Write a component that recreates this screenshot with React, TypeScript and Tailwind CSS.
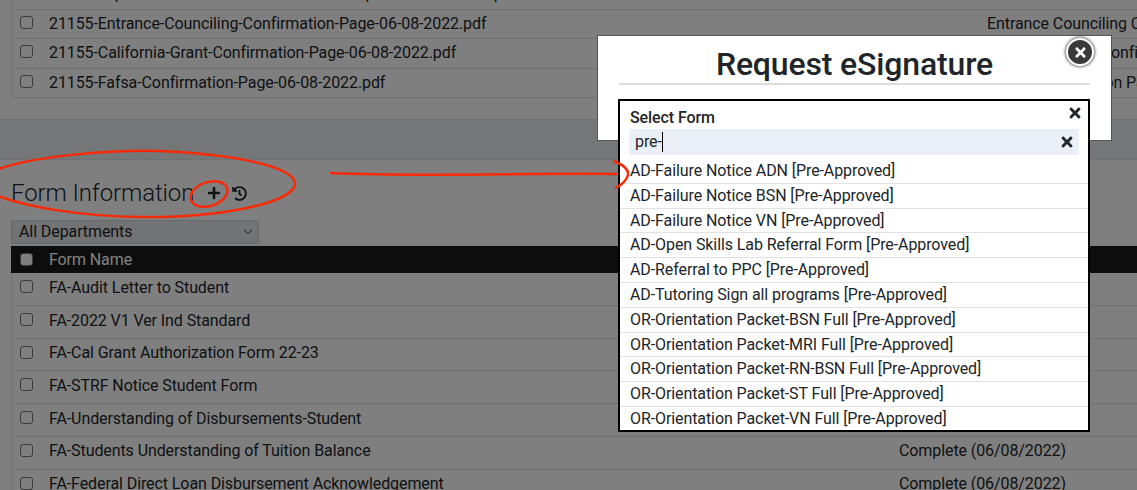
import { ChevronDown } from 'lucide-react';
import { FaHistory, FaPlus, FaTimes } from 'react-icons/fa';

const documents = [
  { name: '21155-Expected-Income-Statement-Record-Update-06-08-2022.pdf', type: '' },
  { name: '21155-Entrance-Counciling-Confirmation-Page-06-08-2022.pdf', type: 'Entrance Counciling Confirmation Page' },
  { name: '21155-California-Grant-Confirmation-Page-06-08-2022.pdf', type: 'California Grant Confirmation Page' },
  { name: '21155-Fafsa-Confirmation-Page-06-08-2022.pdf', type: 'Fafsa Confirmation Page' },
];

const forms = [
  { name: 'FA-Audit Letter to Student', status: '' },
  { name: 'FA-2022 V1 Ver Ind Standard', status: '' },
  { name: 'FA-Cal Grant Authorization Form 22-23', status: '' },
  { name: 'FA-STRF Notice Student Form', status: '' },
  { name: 'FA-Understanding of Disbursements-Student', status: '' },
  { name: 'FA-Students Understanding of Tuition Balance', status: 'Complete (06/08/2022)' },
  { name: 'FA-Federal Direct Loan Disbursement Acknowledgement', status: 'Complete (06/08/2022)' },
];

const options = [
  'AD-Failure Notice ADN [Pre-Approved]',
  'AD-Failure Notice BSN [Pre-Approved]',
  'AD-Failure Notice VN [Pre-Approved]',
  'AD-Open Skills Lab Referral Form [Pre-Approved]',
  'AD-Referral to PPC [Pre-Approved]',
  'AD-Tutoring Sign all programs [Pre-Approved]',
  'OR-Orientation Packet-BSN Full [Pre-Approved]',
  'OR-Orientation Packet-MRI Full [Pre-Approved]',
  'OR-Orientation Packet-RN-BSN Full [Pre-Approved]',
  'OR-Orientation Packet-ST Full [Pre-Approved]',
  'OR-Orientation Packet-VN Full [Pre-Approved]',
];

function Checkbox() {
  return <span className="block w-[13px] h-[13px] rounded-[3px] border border-[#767676] bg-white" />;
}

export default function App() {
  return (
    <div className="relative w-[1137px] h-[490px] overflow-hidden bg-white font-['Roboto',sans-serif] text-base tracking-[-0.09px] text-[#212529]">
      {/* documents */}
      <div className="-mt-[20px] ml-[11px] w-[1200px] border-l border-[#dee2e6]">
        {documents.map((doc) => (
          <div key={doc.name} className="flex h-[29.6px] border-b border-[#dee2e6]">
            <div className="w-[975px] shrink-0 flex items-start">
              <div className="ml-[8px] mt-[6px]">
                <Checkbox />
              </div>
              <span className="ml-[16px] mt-[2px] leading-[24px] whitespace-nowrap">{doc.name}</span>
            </div>
            <span className="mt-[2px] leading-[24px] whitespace-nowrap">{doc.type}</span>
          </div>
        ))}
      </div>

      <div className="mt-[21px] h-[41px] bg-[#e9ecef] border-y border-[#dee2e6]" />

      {/* forms */}
      <div className="ml-[11px] w-[1200px]">
        <div className="mt-[17px] flex items-center h-[32px]">
          <h2 className="font-light text-[24px] tracking-[-0.1px] leading-[32px] text-[#212529] whitespace-nowrap">Form Information</h2>
          <FaPlus className="ml-[13px] text-[14px] text-[#212529]" />
          <FaHistory className="ml-[11px] text-[15px] text-[#212529]" />
        </div>
        <div className="mt-[11px] w-[248px] h-[24px] flex items-center justify-between pl-[7px] pr-[3px] bg-[#e2e6ea] border border-[#ced4da]">
          <span>All Departments</span>
          <ChevronDown size={14} strokeWidth={1.5} />
        </div>
        <div className="mt-[2px] h-[27px] flex items-center bg-[#1a1a1c] text-white">
          <div className="ml-[9px]">
            <Checkbox />
          </div>
          <span className="ml-[16px]">Form Name</span>
        </div>
        <div className="border-l border-[#dee2e6]">
          {forms.map((form) => (
            <div key={form.name} className="flex h-[32.7px] border-b border-[#dee2e6]">
              <div className="w-[887px] shrink-0 flex items-start">
                <div className="ml-[8px] mt-[7px]">
                  <Checkbox />
                </div>
                <span className="ml-[16px] mt-[2.5px] leading-[24px] whitespace-nowrap">{form.name}</span>
              </div>
              <span className="mt-[2.5px] leading-[24px] whitespace-nowrap">{form.status}</span>
            </div>
          ))}
        </div>
      </div>

      {/* backdrop */}
      <div className="absolute inset-0 bg-black/50" />

      {/* annotations under modal */}
      <svg className="absolute inset-0" width="1137" height="490" fill="none" stroke="#fa2a06" strokeWidth="2.5">
        <path d="M-2 169 C40 155 110 150 160 151 C230 154 296 166 295 184 C293 203 220 218 140 217 C80 216 25 207 -4 195" />
        <ellipse cx="209" cy="194" rx="19" ry="12" transform="rotate(-18 209 194)" />
        <path d="M330 173 C420 177 520 173 618 174" />
      </svg>

      {/* modal */}
      <div className="absolute left-[597px] top-[35px] w-[515px] h-[106px] bg-white border border-[#555] px-[21px]">
        <h1 className="mt-[8px] text-center text-[32px] tracking-[-0.15px] font-medium leading-[40px]">Request eSignature</h1>
        <div className="-mt-[1px] h-[2px] bg-[#dcdcdc]" />
      </div>
      <div className="absolute left-[1066px] top-[38px] w-[28px] h-[28px] rounded-full bg-[#3a3a3a] border-2 border-white shadow-[0_0_3px_1px_rgba(0,0,0,0.6)] flex items-center justify-center">
        <FaTimes className="text-[15px] text-white" />
      </div>

      {/* select dropdown */}
      <div className="absolute left-[618px] top-[99px] w-[472px] h-[333px] overflow-hidden bg-white border-2 border-black">
        <div className="flex items-center justify-between pl-[10px] pr-[5px] h-[28px]">
          <span className="font-medium mt-[5px]">Select Form</span>
          <FaTimes className="text-[16px] text-[#212529] -mt-[4px]" />
        </div>
        <div className="mx-[9px] h-[26px] flex items-center justify-between pl-[6px] pr-[4px] bg-[#ebeff7]">
          <span className="border-r border-black leading-[20px]">pre-</span>
          <FaTimes className="text-[16px] text-[#212529]" />
        </div>
        <ul className="mt-[4px]">
          {options.map((option) => (
            <li key={option} className="h-[24.8px] pl-[10px] leading-[23px] border-b border-[#e2e2e2] whitespace-nowrap">
              {option}
            </li>
          ))}
        </ul>
      </div>

      {/* arrow head sits on the dropdown */}
      <svg className="absolute left-[605px] top-[155px]" width="30" height="40" fill="none" stroke="#fa2a06" strokeWidth="2.5">
        <path d="M8 6 C18 9 24 15 23 20 C22 25 16 31 10 33" />
      </svg>
    </div>
  );
}
